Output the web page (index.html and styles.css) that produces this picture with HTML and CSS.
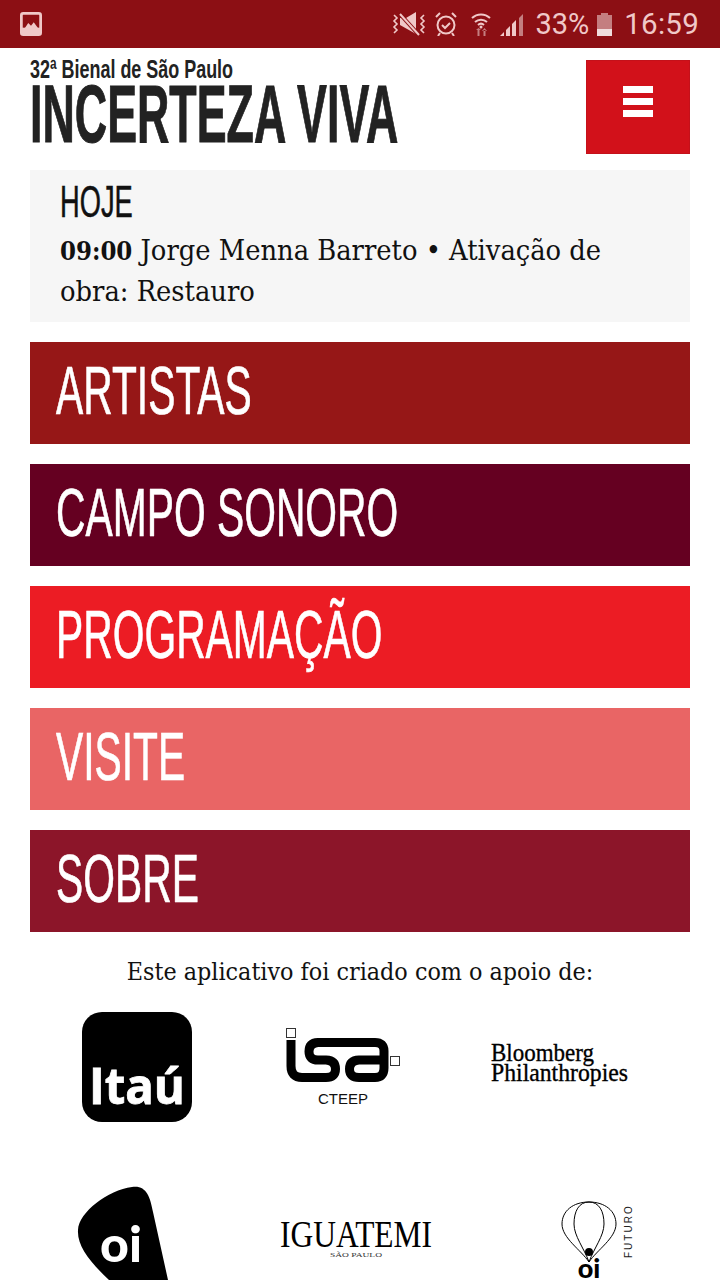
FILE: index.html
```html
<!DOCTYPE html>
<html lang="pt">
<head>
<meta charset="utf-8">
<title>Incerteza Viva</title>
<link rel="stylesheet" href="styles.css">
</head>
<body>
<div class="status">
  <svg class="ic-pic" viewBox="0 0 24 26"><rect x="1.500" y="1.500" width="21" height="23" rx="2" fill="none" stroke="#f0c8c8" stroke-width="3"/><path d="M1 17h22v8H1z" fill="#f0c8c8"/><path d="M5 18l4-6 3 3 3-4 5 7z" fill="#f0c8c8"/></svg>
  <div class="status-right">
    <svg class="ic-mute" viewBox="0 0 36 24"><path d="M3 3l3 3-3 3 3 3-3 3 3 3-3 3M33 3l-3 3 3 3-3 3 3 3-3 3 3 3" fill="none" stroke="#f0c8c8" stroke-width="1.600"/><path d="M9 6h6l10-6v22L9 13z" fill="#f0c8c8"/><path d="M8 1l20 22" stroke="#8c0f14" stroke-width="4"/><path d="M9 2l19 21" stroke="#f0c8c8" stroke-width="2"/></svg>
    <svg class="ic-alarm" viewBox="0 0 22 24"><circle cx="11" cy="13" r="8.500" fill="none" stroke="#f0c8c8" stroke-width="2"/><path d="M7 13l3 3 5-5" fill="none" stroke="#f0c8c8" stroke-width="2"/><path d="M1 5l4-4M21 5l-4-4M5 21l-2 3M17 21l2 3" stroke="#f0c8c8" stroke-width="2"/></svg>
    <svg class="ic-wifi" viewBox="0 0 20 24"><path d="M1 6a13 13 0 0 1 18 0M4 10a9 9 0 0 1 12 0M7 13a4.500 4.500 0 0 1 6 0" fill="none" stroke="#f0c8c8" stroke-width="2"/><circle cx="10" cy="15" r="1.500" fill="#f0c8c8"/><path d="M5 18h5l-2.500-2zM11 19h5l-2.500-3zM6.500 18h2v6h-2zM12.500 18h2v6h-2z" fill="#c47e80"/></svg>
    <svg class="ic-signal" viewBox="0 0 24 23"><path d="M0 23l4-4v4zM6 23v-6l4-4v10zM12 23V11l4-4v16z" fill="#f0c8c8"/><path d="M19 23V5l4-4v22z" fill="#c47e80"/></svg>
    <span class="pct">33%</span>
    <svg class="ic-batt" viewBox="0 0 15 23"><path d="M4 0h7v2h4v21H0V2h4z" fill="#c47e80"/><path d="M0 16h15v7H0z" fill="#f0dcdc"/></svg>
    <span class="clock">16:59</span>
  </div>
</div>

<div class="page">
  <header class="head">
    <div class="brand">
      <div class="brand-sub"><span>32ª Bienal de São Paulo</span></div>
      <div class="brand-title"><span>INCERTEZA VIVA</span></div>
    </div>
    <button class="burger" aria-label="Menu"><i></i><i></i><i></i></button>
  </header>

  <section class="today">
    <h2><span>HOJE</span></h2>
    <p><b>09:00</b> Jorge Menna Barreto • Ativação de obra: Restauro</p>
  </section>

  <nav class="nav">
    <a class="nav-item c1"><span>ARTISTAS</span></a>
    <a class="nav-item c2"><span>CAMPO SONORO</span></a>
    <a class="nav-item c3"><span>PROGRAMAÇÃO</span></a>
    <a class="nav-item c4"><span>VISITE</span></a>
    <a class="nav-item c5"><span>SOBRE</span></a>
  </nav>

  <p class="support">Este aplicativo foi criado com o apoio de:</p>

  <div class="logos">
    <svg class="logo l-itau" viewBox="0 0 110 110"><rect width="110" height="110" rx="20" fill="#000"/><text x="55" y="92" text-anchor="middle" class="t-itau" textLength="96" lengthAdjust="spacingAndGlyphs">Itaú</text></svg>
    <svg class="logo l-isa" viewBox="0 0 116 84"><rect x="1.500" y="0.500" width="9" height="9" fill="#fff" stroke="#333" stroke-width="1"/><rect x="105.500" y="28.500" width="9" height="9" fill="#fff" stroke="#333" stroke-width="1"/>
      <path d="M6 12V38Q6 49.500 17 49.500H41Q50.500 49.500 50.500 41T41 32H33Q24 32 24 23.500T33 14.500H90Q99 14.500 99 23V40Q99 49.500 90 49.500H74Q64.500 49.500 64.500 41T74 32H97" fill="none" stroke="#000" stroke-width="9"/>
      <text x="58" y="76" text-anchor="middle" class="t-cteep">CTEEP</text></svg>
    <svg class="logo l-bloom" viewBox="0 0 140 50"><text x="1" y="21" class="t-bloom" textLength="103" lengthAdjust="spacingAndGlyphs">Bloomberg</text><text x="1" y="41" class="t-bloom" textLength="137" lengthAdjust="spacingAndGlyphs">Philanthropies</text></svg>
    <svg class="logo l-oi" viewBox="0 0 90 94"><path d="M54 1C68 -1 72 10 75 26L90 94H31C12 76 -1 60 0 44 1 26 30 4 54 1z" fill="#000"/><text x="43" y="76" text-anchor="middle" class="t-oi">oi</text></svg>
    <svg class="logo l-igua" viewBox="0 0 152 40"><text x="76" y="27" text-anchor="middle" class="t-igua" textLength="152" lengthAdjust="spacingAndGlyphs">IGUATEMI</text><text x="76" y="37" text-anchor="middle" class="t-sp" textLength="52" lengthAdjust="spacingAndGlyphs">SÃO PAULO</text></svg>
    <svg class="logo l-fut" viewBox="0 0 80 80"><path d="M30 2C14 2 3 11 3 24 3 38 22 50 30 62 38 50 57 38 57 24 57 11 46 2 30 2zM30 2C20 2 15 11 15 24 15 36 25 48 30 62 35 48 45 36 45 24 45 11 40 2 30 2z" fill="none" stroke="#000" stroke-width="1"/><circle cx="30" cy="52" r="4" fill="#000"/><text x="30" y="78" text-anchor="middle" class="t-oi2">oi</text><text transform="translate(73 58) rotate(-90)" class="t-fut">FUTURO</text></svg>
  </div>
</div>
</body>
</html>
```
FILE: styles.css
```css
* { box-sizing: border-box; }
html, body { margin: 0; padding: 0; height: 1280px; overflow: hidden; background: #fff; }
body { font-family: "DejaVu Serif", "Liberation Serif", serif; color: #111; }

.status { height: 48px; background: #8c0f14; display: flex; align-items: center; justify-content: space-between; padding: 0 21px 0 20px; color: #f0c8c8; font-family: Roboto, "Liberation Sans", sans-serif; }
.ic-pic { width: 22px; height: 24px; }
.status-right { display: flex; align-items: center; }
.ic-mute { width: 36px; height: 24px; margin-right: 8px; }
.ic-alarm { width: 22px; height: 24px; margin-right: 14px; }
.ic-wifi { width: 20px; height: 24px; margin-right: 9px; }
.ic-signal { width: 24px; height: 23px; margin-right: 11px; }
.ic-batt { width: 15px; height: 23px; margin: 0 12px 0 8px; }
.pct { font-size: 29px; line-height: 48px; }
.clock { font-size: 29.500px; line-height: 48px; letter-spacing: .25px; }

.page { padding: 0 30px; }

.head { height: 122px; display: flex; align-items: flex-start; justify-content: space-between; }
.brand { flex: 1; min-width: 0; font-family: "Liberation Sans", sans-serif; font-weight: 700; color: #222; white-space: nowrap; padding-top: 8px; }
.brand span, .today h2 span, .nav-item span { display: inline-block; transform-origin: left center; }
.brand-sub { font-size: 26px; line-height: 26px; }
.brand-sub span { transform: scaleX(.69); }
.brand-title { font-size: 81px; line-height: 60px; margin-top: 2px; -webkit-text-stroke: 1px #222; }
.brand-title span { transform: scaleX(.553); }
.burger { width: 104px; height: 94px; margin-top: 12px; border: 1px solid #c4111a; background: #d2111a; padding: 0 0 11px; display: flex; flex-direction: column; align-items: center; justify-content: center; gap: 5px; }
.burger i { display: block; width: 30px; height: 7px; background: #fff; }

.today { background: #f6f6f6; height: 152px; padding: 10px 30px 0; }
.today h2 { margin: 0 0 6px; font-family: "Liberation Sans", sans-serif; font-weight: 400; font-size: 44px; line-height: 44px; color: #111; white-space: nowrap; -webkit-text-stroke: .5px #111; }
.today h2 span { transform: scaleX(.62); }
.today p { margin: 0; font-size: 28.700px; line-height: 40px; font-stretch: condensed; }
.today b { font-size: 25.500px; }

.nav { display: flex; flex-direction: column; gap: 20px; margin-top: 20px; }
.nav-item { height: 102px; display: flex; align-items: center; padding: 0 0 7px 26px; color: #fff; font-family: "Liberation Sans", sans-serif; font-size: 68px; white-space: nowrap; -webkit-text-stroke: .7px #fff; }
.nav-item span { transform: scaleX(.6); }
.c1 { background: #961717; }
.c2 { background: #650021; }
.c3 { background: #ec1c24; }
.c4 { background: #e96565; }
.c5 { background: #8c1529; }

.support { margin: 24px 0 0; text-align: center; font-size: 24.800px; line-height: 32px; font-stretch: condensed; }

.logos { display: grid; grid-template-columns: 212px 212px 236px; grid-template-rows: 174px 94px; margin-top: 24px; }
.logo { display: block; overflow: visible; }
.l-itau { width: 110px; height: 110px; margin-left: 52px; }
.l-isa { width: 116px; height: 84px; margin: 16px 0 0 43px; }
.l-bloom { width: 140px; height: 50px; margin: 28px 0 0 36px; }
.l-oi { width: 90px; height: 94px; margin-left: 48px; }
.l-igua { width: 152px; height: 40px; margin: 34px 0 0 38px; }
.l-fut { width: 80px; height: 80px; margin: 14px 0 0 105px; }

.t-itau { font-family: "Open Sans", sans-serif; font-weight: 700; font-size: 50px; fill: #fff; stroke: #fff; stroke-width: .8px; }
.t-cteep { font-family: "Liberation Sans", sans-serif; font-size: 15px; fill: #111; }
.t-bloom { font-family: "Liberation Serif", serif; font-size: 25px; fill: #000; stroke: #000; stroke-width: .35px; }
.t-oi { font-family: Lato, sans-serif; font-weight: 900; font-size: 50px; fill: #fff; }
.t-igua { font-family: "Liberation Serif", serif; font-size: 37px; fill: #000; }
.t-sp { font-family: "Liberation Serif", serif; font-size: 7px; fill: #333; }
.t-oi2 { font-family: Lato, sans-serif; font-weight: 900; font-size: 27px; fill: #000; }
.t-fut { font-family: "Liberation Sans", sans-serif; font-size: 10px; letter-spacing: 2px; fill: #222; }
```
